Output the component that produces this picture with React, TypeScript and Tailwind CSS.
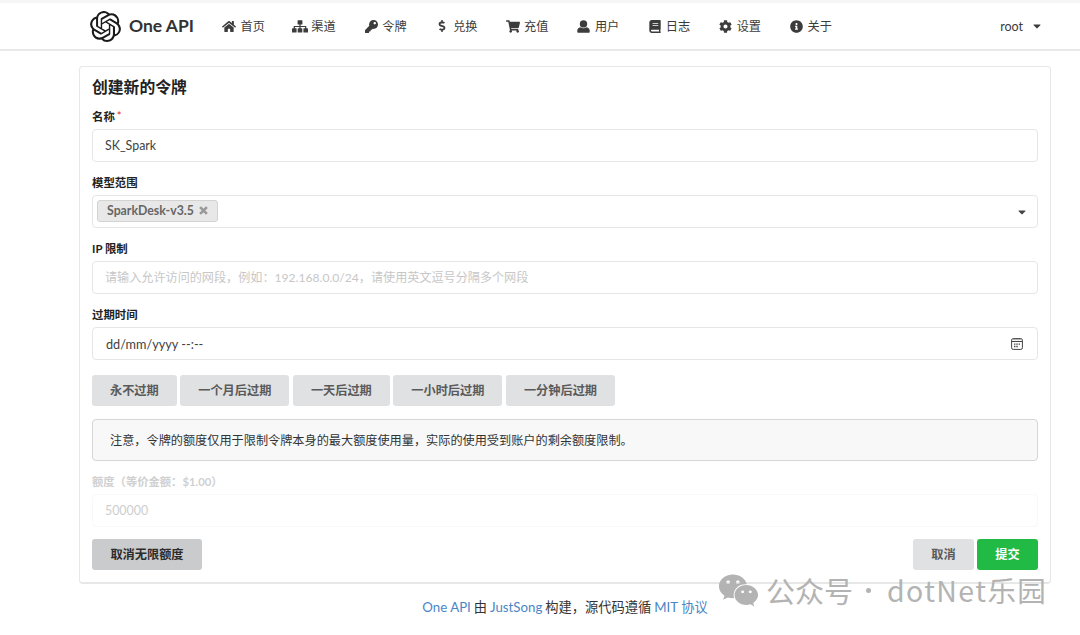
import type { ReactNode } from "react";
import {
  FaBook,
  FaCaretDown,
  FaCog,
  FaDollarSign,
  FaHome,
  FaInfoCircle,
  FaKey,
  FaShoppingCart,
  FaWeixin,
} from "react-icons/fa";
import { SiOpenai } from "react-icons/si";

function SitemapIcon({ className }: { className?: string }) {
  return (
    <svg viewBox="0 0 16 13" className={className} fill="currentColor">
      <rect x="5.6" y="0.2" width="4.8" height="4.4" rx="0.6" />
      <rect x="0" y="8.2" width="4.6" height="4.4" rx="0.6" />
      <rect x="5.7" y="8.2" width="4.6" height="4.4" rx="0.6" />
      <rect x="11.4" y="8.2" width="4.6" height="4.4" rx="0.6" />
      <path d="M8 4v5M2.3 9V6.5h11.4V9" fill="none" stroke="currentColor" strokeWidth="1.2" />
    </svg>
  );
}

function UserIcon({ className }: { className?: string }) {
  return (
    <svg viewBox="0 0 13 13" className={className} fill="currentColor">
      <circle cx="6.5" cy="3.9" r="3.7" />
      <path d="M3.3 7.3C1.4 7.8.3 9 .3 10.6v1.1c0 .6.4 1 1 1h10.4c.6 0 1-.4 1-1v-1.1c0-1.6-1.100-2.800-3-3.300-1.900 1.300-4.500 1.300-6.400 0z" />
    </svg>
  );
}

function DeleteIcon() {
  return (
    <svg viewBox="0 0 10 10" className="ml-[5px] size-[9px]" fill="none" stroke="#999" strokeWidth="2.9">
      <path d="M1.200 1.200l7.600 7.600M8.800 1.200l-7.600 7.600" />
    </svg>
  );
}

const menu: { icon: (props: { className?: string }) => ReactNode; label: string; size: string }[] = [
  { icon: FaHome, label: "首页", size: "w-[14px] h-[13px]" },
  { icon: SitemapIcon, label: "渠道", size: "w-[16px] h-[13px]" },
  { icon: FaKey, label: "令牌", size: "w-[13px] h-[13px]" },
  { icon: FaDollarSign, label: "兑换", size: "w-[8px] h-[12px]" },
  { icon: FaShoppingCart, label: "充值", size: "w-[14px] h-[13px]" },
  { icon: UserIcon, label: "用户", size: "w-[13px] h-[13px]" },
  { icon: FaBook, label: "日志", size: "w-[12px] h-[13px]" },
  { icon: FaCog, label: "设置", size: "w-[13px] h-[13px]" },
  { icon: FaInfoCircle, label: "关于", size: "w-[13px] h-[13px]" },
];

const expiries = ["永不过期", "一个月后过期", "一天后过期", "一小时后过期", "一分钟后过期"];

function Header() {
  return (
    <header className="h-[51px] border-t-[3px] border-b-2 border-t-[#f6f6f6] border-b-[#e9e9e9] bg-white">
      <nav className="flex h-full items-center pl-[90px] pr-[37px] text-[#3c3c3c]">
        <SiOpenai className="size-[31px] text-[#1b1b1b]" />
        <span className="ml-[8px] w-[79px] whitespace-nowrap text-[17.5px] font-bold text-[#333]">One API</span>
        <ul className="flex">
          {menu.map(({ icon: Icon, label, size }) => (
            <li key={label} className="flex w-[70.9px] items-center justify-center">
              <span className="mr-[4px] flex w-[14.4px] justify-center">
                <Icon className={`shrink-0 ${size}`} />
              </span>
              <span className="whitespace-nowrap pt-[2px]">{label}</span>
            </li>
          ))}
        </ul>
        <span className="ml-auto pt-px text-[12.5px]">root</span>
        <FaCaretDown className="ml-[8px] size-[12px]" />
      </nav>
    </header>
  );
}

function Field({ label, required, children }: { label: string; required?: boolean; children: ReactNode }) {
  return (
    <div className="mb-[12px]">
      <div className="mb-[3px] flex h-[18px] items-center text-[11.4px] font-bold">
        {label}
        {required && <span className="mb-[2px] ml-[2px] font-normal text-[#db2828]">*</span>}
      </div>
      <div className="flex h-[33px] items-center rounded-[4px] border border-[#e6e6e7] bg-white px-[12px]">{children}</div>
    </div>
  );
}

function CalendarIcon() {
  return (
    <svg viewBox="0 0 12 12" className="ml-auto mr-[2px] size-[12px]" fill="none" stroke="#444" strokeWidth="1">
      <rect x="0.6" y="0.6" width="10.8" height="10.8" rx="1.6" />
      <path d="M1 1.6h10" stroke="#aaa" />
      <path d="M0.6 3.5h10.8" />
      <path d="M3 6.1h6.2M3 8.5h4" strokeWidth="1.3" strokeDasharray="1.4 0.9" />
    </svg>
  );
}

function TokenForm() {
  return (
    <main className="ml-[79px] mt-[15px] h-[518px] w-[972px] rounded-[4px] border-x-[1.5px] border-t border-b-2 border-[#e7e7e7] bg-white px-[12px] pt-[8px]">
      <h1 className="mb-[10px] h-[23px] text-[15.8px] font-bold leading-[23px]">创建新的令牌</h1>
      <Field label="名称" required>
        <span className="pt-px text-[12.4px] text-[#3f3f3f]">SK_Spark</span>
      </Field>
      <Field label="模型范围">
        <span className="-ml-[8px] mb-[2px] flex h-[22px] w-[121px] items-center rounded-[3px] border border-[#d3d3d3] bg-[#e8e8e8] pl-[9px] font-bold text-[#666]">
          <span className="whitespace-nowrap text-[12.3px]">SparkDesk-v3.5</span>
          <DeleteIcon />
        </span>
        <FaCaretDown className="ml-auto mr-[-3px] size-[12px] text-[#444]" />
      </Field>
      <Field label="IP 限制">
        <span className="whitespace-nowrap text-[12.12px] text-[#c7c7c7]">
          请输入允许访问的网段，例如：192.168.0.0/24，请使用英文逗号分隔多个网段
        </span>
      </Field>
      <Field label="过期时间">
        <span className="ml-px text-[12.7px] text-[#3f3f3f]">dd/mm/yyyy --:--</span>
        <CalendarIcon />
      </Field>
      <div className="mt-[15px] flex gap-[3.5px]">
        {expiries.map((label) => (
          <button
            key={label}
            className="h-[31px] whitespace-nowrap rounded-[3px] bg-[#e0e1e2] px-[18px] font-bold text-[#5a5a5a]"
          >
            {label}
          </button>
        ))}
      </div>
      <div className="mt-[13px] flex h-[42px] items-center rounded-[4px] border border-[#d5d6d6] bg-[#f8f8f9] px-[17px] pt-[2px] text-[12.17px] text-[#333]">
        注意，令牌的额度仅用于限制令牌本身的最大额度使用量，实际的使用受到账户的剩余额度限制。
      </div>
      <div className="mt-[12px] flex h-[18px] items-center text-[11.3px] font-bold text-[#d0d0d0]">额度（等价金额：$1.00）</div>
      <div className="mt-[3px] flex h-[33px] items-center rounded-[4px] border border-[#f8f8f8] px-[12px] pt-px text-[12.4px] text-[#cecece]">500000</div>
      <div className="mt-[12px] flex gap-[3px]">
        <button className="h-[31px] w-[110px] rounded-[3px] bg-[#cacbcd] font-bold text-[#2c2c2c]">取消无限额度</button>
        <button className="ml-auto h-[31px] w-[61px] rounded-[3px] bg-[#e0e1e2] font-bold text-[#5a5a5a]">取消</button>
        <button className="h-[31px] w-[61px] rounded-[3px] bg-[#21ba45] font-bold text-white">提交</button>
      </div>
    </main>
  );
}

export default function App() {
  return (
    <div className="relative h-[635px] w-[1080px] overflow-hidden bg-white font-[Lato,'Noto_Sans_CJK_SC',sans-serif] text-[12.2px] leading-[18px] text-[#222]">
      <Header />
      <TokenForm />
      <footer className="mt-[14px] flex justify-center gap-[3px] whitespace-nowrap pl-[50px] text-[13.25px] text-[#333]">
        <span className="text-[#4a86c5]">One API</span>
        <span>由</span>
        <span className="text-[#4a86c5]">JustSong</span>
        <span>构建，源代码遵循</span>
        <span className="text-[#4a86c5]">MIT 协议</span>
      </footer>
      <div className="absolute left-[718px] top-[569px] flex h-[42px] items-center whitespace-nowrap font-['Noto_Sans_CJK_SC',sans-serif] text-[#b3b3b3]">
        <FaWeixin className="h-[41px] w-[41px]" />
        <span className="ml-[7px] text-[29px]">公众号</span>
        <span className="ml-[13px] size-[5px] rounded-full bg-[#b3b3b3]" />
        <span className="ml-[16px] text-[28.5px] tracking-[1.4px]">dotNet乐园</span>
      </div>
    </div>
  );
}
